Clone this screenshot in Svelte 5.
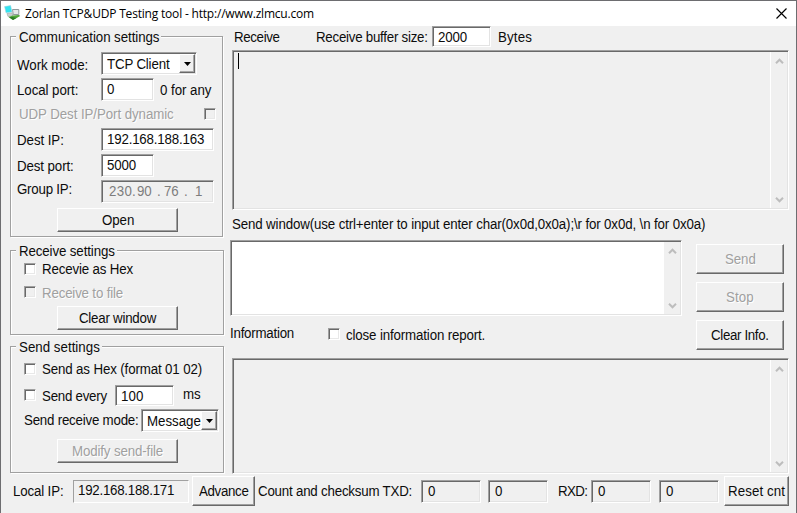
<script>
  const CONDENSE = 0.95;

  // Sets a label over a fixed width in slightly condensed glyphs.
  function fit(node, width) {
    const inner = width / CONDENSE;
    const natural = node.offsetWidth;
    const n = node.textContent.length;
    node.style.letterSpacing = `${(inner - natural) / n}px`;
    node.style.width = `${inner}px`;
    node.style.marginRight = `${width - inner}px`;
    node.style.transform = `scaleX(${CONDENSE})`;
  }

  function track(node, width) {
    const natural = node.getBoundingClientRect().width;
    node.style.letterSpacing = `${(width - natural) / node.textContent.length}px`;
  }
</script>

{#snippet t(text, width)}<span class="t" use:fit={width}>{text}</span>{/snippet}

{#snippet bar()}
  <div class="bar">
    <svg width="9" height="7" viewBox="0 0 9 7"><path d="M1 5.2 4.5 1.7 8 5.2" /></svg>
    <svg width="9" height="7" viewBox="0 0 9 7"><path d="M1 1.8 4.5 5.3 8 1.8" /></svg>
  </div>
{/snippet}

{#snippet arrow()}
  <span class="drop"><svg width="7" height="4" viewBox="0 0 7 4"><path d="M0 0h7L3.5 4z" fill="#000" /></svg></span>
{/snippet}

<div class="window">
  <header>
    <svg class="logo" width="17" height="16" viewBox="0 0 17 16">
      <path d="M8.5 4.5h6.3v5H9.2z" fill="#e4e8e8" stroke="#8f9a9c" />
      <path d="M3 8.5l5-.6 1 3-5 .6z" fill="#c9d0cf" stroke="#98a3a0" stroke-width=".6" />
      <path d="M.6 1.6 6.6.6 8 7 2 7.8z" fill="#2fe3f0" stroke="#9fd3dc" stroke-width=".6" />
      <path d="M4.5 12 9 10.6l6-.6 1.2 1L9 15z" fill="#4fa637" />
      <path d="M5 12.3 9 15l3.4-1.9L8.5 12z" fill="#2b7c25" />
    </svg>
    <span class="title" use:track={289}>Zorlan TCP&amp;UDP Testing tool - http://www.zlmcu.com</span>
    <svg class="close" width="11" height="11" viewBox="0 0 11 11"><path d="M.5.5l10 10M10.5.5l-10 10" stroke="#000" stroke-width="1.15" /></svg>
  </header>

  <main>
    <div class="left">
      <section class="group comm">
        <div class="legend">{@render t('Communication settings', 140)}</div>
        <div class="row mode">
          <div class="label">{@render t('Work mode:', 71)}</div>
          <div class="field select">{@render t('TCP Client', 62)}{@render arrow()}</div>
        </div>
        <div class="row next local">
          <div class="label">{@render t('Local port:', 61)}</div>
          <div class="field short">{@render t('0', 8)}</div>
          <div class="after">{@render t('0 for any', 51)}</div>
        </div>
        <div class="row udp off">{@render t('UDP Dest IP/Port dynamic', 155)}<i class="check"></i></div>
        <div class="row dest">
          <div class="label">{@render t('Dest IP:', 47)}</div>
          <div class="field ip">{@render t('192.168.188.163', 97)}</div>
        </div>
        <div class="row next">
          <div class="label">{@render t('Dest port:', 57)}</div>
          <div class="field short">{@render t('5000', 29)}</div>
        </div>
        <div class="row next">
          <div class="label raised">{@render t('Group IP:', 55)}</div>
          <div class="field ip readonly">
            {@render t('230', 23)}{@render t('.', 5)}{@render t('90', 15)}<b></b>{@render t('.', 7)}{@render t('76', 15)}<b></b>{@render t('.', 11)}{@render t('1', 8)}
          </div>
        </div>
        <div class="button wide">{@render t('Open', 32)}</div>
      </section>

      <section class="group recv">
        <div class="legend">{@render t('Receive settings', 96)}</div>
        <div class="row option r1"><i class="check on"></i>{@render t('Recevie as Hex', 91)}</div>
        <div class="row option r2 off"><i class="check"></i>{@render t('Receive to file', 81)}</div>
        <div class="button wide">{@render t('Clear window', 77)}</div>
      </section>

      <section class="group send">
        <div class="legend">{@render t('Send settings', 81)}</div>
        <div class="row option s1"><i class="check on"></i>{@render t('Send as Hex (format 01 02)', 160)}</div>
        <div class="row option s2">
          <i class="check on"></i>{@render t('Send every', 65)}
          <div class="field every">{@render t('100', 22)}</div>
          <div class="ms">{@render t('ms', 18)}</div>
        </div>
        <div class="row s3">
          <div class="modelabel">{@render t('Send receive mode:', 115)}</div>
          <div class="field select message">{@render t('Message', 54)}{@render arrow()}</div>
        </div>
        <div class="button wide off">{@render t('Modify send-file', 91)}</div>
      </section>
    </div>

    <div class="right">
      <div class="row top">
        {@render t('Receive', 46)}
        <div class="bufsize">{@render t('Receive buffer size:', 112)}</div>
        <div class="field buf">{@render t('2000', 29)}</div>
        <div class="bytes">{@render t('Bytes', 34)}</div>
      </div>
      <div class="area gray receive"><div class="text"><span class="caret"></span></div>{@render bar()}</div>
      <div class="sendlabel">{@render t('Send window(use ctrl+enter to input enter char(0x0d,0x0a);\\r for 0x0d, \\n for 0x0a)', 473)}</div>
      <div class="middle">
        <div class="compose">
          <div class="area white"><div class="text"></div>{@render bar()}</div>
          <div class="info">
            <div class="infolabel">{@render t('Information', 64)}</div>
            <i class="check on"></i>
            {@render t('close information report.', 139)}
          </div>
        </div>
        <div class="actions">
          <div class="button off">{@render t('Send', 31)}</div>
          <div class="button off">{@render t('Stop', 28)}</div>
          <div class="button">{@render t('Clear Info.', 58)}</div>
        </div>
      </div>
      <div class="area gray report"><div class="text"></div>{@render bar()}</div>
    </div>
  </main>

  <footer>
    {@render t('Local IP:', 50)}
    <div class="stat address">{@render t('192.168.188.171', 96)}</div>
    <div class="button advance">{@render t('Advance', 49)}</div>
    {@render t('Count and checksum TXD:', 154)}
    <div class="stat tx">{@render t('0', 8)}</div>
    <div class="stat tx2">{@render t('0', 8)}</div>
    <div class="rxd">{@render t('RXD:', 29)}</div>
    <div class="stat rx">{@render t('0', 8)}</div>
    <div class="stat rx2">{@render t('0', 8)}</div>
    <div class="button reset">{@render t('Reset cnt', 57)}</div>
  </footer>
</div>

<style>
  :global(body) { margin: 0; overflow: hidden; }
  .window, .window * { box-sizing: border-box; }
  .window {
    width: 797px; height: 513px; background: #f0f0f0; color: #0c0c0c;
    border: solid #6d6d70; border-width: 1px 1px 0;
    font: 14px/16px "Liberation Sans", Arial, sans-serif;
    display: flex; flex-direction: column;
  }
  svg { display: block; flex: none; }
  .t, .title { display: inline-block; white-space: pre; flex: none; }
  .t { transform-origin: left; }

  header { height: 25px; flex: none; background: #fff; display: flex; align-items: center; padding: 0 9px 0 3px; }
  .title { font: 12px/18px "Open Sans", "Noto Sans", sans-serif; margin-left: 4px; color: #000; }
  .logo { margin-top: -1px; }
  .close { margin-left: auto; }

  main { display: flex; height: 448px; flex: none; padding-left: 9px; }
  .left { width: 214px; flex: none; padding-top: 10px; }
  .group {
    width: 214px; border: 1px solid #a0a0a0;
    box-shadow: 1px 1px #fff, inset 1px 1px #fff;
  }
  .legend { display: flex; width: fit-content; height: 16px; margin: -8px 0 0 5px; padding: 0 2px 0 3px; background: #f0f0f0; }
  .comm { width: 213px; height: 201px; }
  .recv { height: 85px; margin-top: 13px; }
  .send { height: 127px; margin-top: 11px; }

  .row { display: flex; align-items: center; height: 23px; }
  .label { width: 84px; margin-left: 6px; padding-top: 1px; flex: none; }
  .mode .label { padding-top: 2px; }
  .raised { margin-top: -7px; }
  .mode { margin-top: 7px; }
  .next { margin-top: 3px; }
  .dest { margin-top: 8px; }
  .udp { height: 13px; margin-top: 6px; padding-left: 8px; }
  .udp .check { margin-left: 30px; }
  .after { margin-left: 6px; padding-top: 1px; }

  .field {
    height: 23px; background: #fff; display: flex; align-items: flex-start; flex: none; padding: 2px 1px 1px 5px;
  }
  .field, .area {
    border: 1px solid; border-color: #a0a0a0 #fff #fff #a0a0a0;
    box-shadow: inset 1px 1px #696969, inset -1px -1px #e3e3e3;
  }
  .short { width: 53px; }
  .ip { width: 113px; }
  .readonly { background: #f0f0f0; color: #7d7d7d; padding-left: 7px; }
  .readonly b { width: 5px; }
  .select { width: 96px; padding: 1px 1px 1px 5px; justify-content: space-between; align-items: center; }
  .drop {
    width: 16px; height: 19px; flex: none; background: #f0f0f0; display: flex; align-items: center; justify-content: center;
    border: 1px solid; border-color: #fff #696969 #696969 #fff; box-shadow: inset -1px -1px #a8a8a8;
  }
  .check {
    width: 12px; height: 12px; flex: none; border: 1px solid; border-color: #a0a0a0 #fff #fff #a0a0a0;
    box-shadow: inset 1px 1px #696969, inset -1px -1px #e8e8e8;
  }
  .check.on { background: #fff; }
  .off { color: #a0a0a0; text-shadow: 1px 1px #fff; }

  .button {
    display: flex; align-items: center; justify-content: center; flex: none; background: #f0f0f0;
    border: 1px solid; border-color: #fff #696969 #696969 #fff; box-shadow: inset -1px -1px #a0a0a0;
  }
  .wide { width: 121px; height: 24px; margin: 5px 0 0 46px; }

  .option { height: 16px; padding-left: 13px; }
  .option .check { margin-right: 6px; }
  .r1 { margin-top: 2px; }
  .r2 { margin-top: 8px; }
  .r2 .check { margin-top: -2px; }
  .recv .wide { margin-top: 5px; }
  .s1 { margin-top: 6px; }
  .s2 { height: 21px; margin-top: 8px; }
  .s2 .check { margin-top: -2px; }
  .every { width: 59px; height: 21px; margin-left: 8px; }
  .ms { margin: -4px 0 0 9px; }
  .s3 { margin-top: 3px; }
  .modelabel { margin: -1px 0 0 13px; width: 117px; }
  .message { width: 78px; }
  .send .wide { margin-top: 7px; }

  .right { width: 565px; flex: none; padding-left: 8px; }
  .top { height: 21px; padding-left: 2px; }
  .bufsize { margin-left: 36px; }
  .buf { width: 59px; height: 21px; margin-left: 4px; }
  .bytes { margin-left: 7px; }
  .area { display: flex; padding: 1px; }
  .text { flex: 1; }
  .gray { width: 557px; }
  .gray .bar { border-left: 1px solid #fff; }
  .receive { height: 160px; margin-top: 3px; }
  .caret { display: block; width: 1px; height: 16px; margin: 1px 0 0 4px; background: #000; }
  .bar {
    width: 17px; background: #f0f0f0; display: flex; flex-direction: column; align-items: center;
    justify-content: space-between; padding: 6px 0 5px;
  }
  .white .bar { width: 16px; }
  .bar path { fill: none; stroke: #bdbdbd; stroke-width: 2; }
  .sendlabel { height: 30px; padding-top: 6px; }
  .middle { display: flex; margin-left: -2px; height: 118px; }
  .compose { width: 452px; }
  .white { height: 76px; background: #fff; }
  .info { display: flex; align-items: center; height: 20px; margin-top: 8px; padding-top: 2px; }
  .infolabel { margin: -4px 34px 0 0; }
  .info .check { margin: -3px 6px 0 0; }
  .actions { display: flex; flex-direction: column; gap: 8px; padding: 4px 0 0 14px; }
  .actions .button { width: 88px; height: 30px; }
  .report { height: 116px; }

  footer { display: flex; align-items: center; height: 34px; padding-left: 12px; }
  .stat {
    width: 60px; height: 23px; padding: 2px 0 0 6px; display: flex; align-items: flex-start; flex: none;
    border: 1px solid; border-color: #a0a0a0 #fff #fff #a0a0a0;
    box-shadow: inset 1px 1px #696969, inset -1px -1px #e3e3e3;
  }
  .address { width: 116px; margin-left: 10px; padding: 1px 0 0 4px; box-shadow: none; }
  .advance, .reset { height: 30px; }
  .advance { width: 63px; margin: 0 3px 0 3px; }
  .tx { margin-left: 9px; }
  .tx2 { margin-left: 7px; }
  .rxd { margin-left: 10px; }
  .rx { margin-left: 4px; }
  .rx2 { margin-left: 8px; }
  .reset { width: 65px; margin-left: 5px; }
</style>
